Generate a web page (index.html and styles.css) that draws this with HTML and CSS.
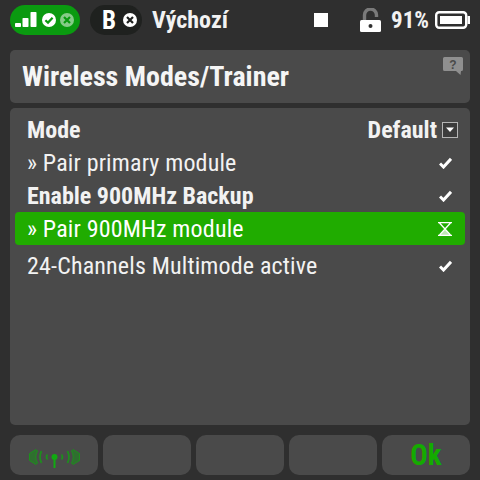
FILE: index.html
```html
<!DOCTYPE html>
<html lang="en">
<head>
<meta charset="utf-8">
<title>Wireless Modes/Trainer</title>
<link rel="stylesheet" href="styles.css">
</head>
<body>
<div class="screen">
  <header class="status">
    <div class="pill pill-green">
      <svg class="bars" width="22" height="16" viewBox="0 0 22 16"><rect x="0" y="11" width="6" height="4" rx="0.800"/><rect x="7.500" y="6" width="6" height="9" rx="0.800"/><rect x="15.500" y="0" width="6" height="15" rx="0.800"/></svg>
      <svg class="dot" width="14" height="14" viewBox="0 0 14 14"><circle cx="7" cy="7" r="7" fill="#fff"/><path d="M3.400 7.200 6 9.600 10.600 4.800" fill="none" stroke="#0a9a10" stroke-width="2.200"/></svg>
      <svg class="dot" width="14" height="14" viewBox="0 0 14 14"><circle cx="7" cy="7" r="7" fill="#86cb88"/><path d="M4 4 10 10M10 4 4 10" fill="none" stroke="#0a9a10" stroke-width="2.200"/></svg>
    </div>
    <div class="pill pill-dark">
      <span class="pill-b">B</span>
      <svg class="dot" width="14" height="14" viewBox="0 0 14 14"><circle cx="7" cy="7" r="7" fill="#fff"/><path d="M4 4 10 10M10 4 4 10" fill="none" stroke="#1f211f" stroke-width="2.200"/></svg>
    </div>
    <span class="profile">Výchozí</span>
    <span class="stop"></span>
    <svg class="lock" width="21" height="24" viewBox="0 0 21 24"><path d="M4.500 12V7a6 6 0 0 1 12 0v2" fill="none" stroke="#7a7a7a" stroke-width="3.400"/><rect x="0" y="12" width="21" height="12" rx="1.500" fill="#fff"/><circle cx="10.500" cy="18" r="2" fill="#2f2f2f"/></svg>
    <span class="pct">91%</span>
    <svg class="batt" width="35" height="18" viewBox="0 0 35 18"><rect x="1.200" y="1.200" width="30" height="15.600" rx="3" fill="none" stroke="#fff" stroke-width="2.400"/><rect x="5" y="5" width="22" height="8" fill="#fff"/><rect x="32.500" y="5" width="2.500" height="8" fill="#fff"/></svg>
  </header>

  <section class="card title-card">
    <h1 class="title">Wireless Modes/Trainer</h1>
    <svg class="help" width="20" height="18" viewBox="0 0 20 18"><path d="M1.500 0H18.500A1.500 1.500 0 0 1 20 1.500V12.500A1.500 1.500 0 0 1 18.500 14H18L17.500 18 13 14H1.500A1.500 1.500 0 0 1 0 12.500V1.500A1.500 1.500 0 0 1 1.500 0Z" fill="#8f8f8f"/><text x="10" y="11.500" class="help-q">?</text></svg>
  </section>

  <main class="card list">
    <div class="row bold">
      <span>Mode</span>
      <span class="default">Default
        <svg class="drop" width="16" height="16" viewBox="0 0 16 16"><rect x="0.500" y="0.500" width="15" height="15" fill="#3c3c3c" stroke="#b5b5b5"/><path d="M4 5.500H12L8 10Z" fill="#fff"/></svg>
      </span>
    </div>
    <div class="row"><span>» Pair primary module</span><svg class="check" width="13" height="12" viewBox="0 0 13 12"><path d="M1 6.500 4.500 10 12 1.800" fill="none" stroke="#fff" stroke-width="3"/></svg></div>
    <div class="row bold"><span>Enable 900MHz Backup</span><svg class="check" width="13" height="12" viewBox="0 0 13 12"><path d="M1 6.500 4.500 10 12 1.800" fill="none" stroke="#fff" stroke-width="3"/></svg></div>
    <div class="row active"><span>» Pair 900MHz module</span>
      <svg class="hour" width="14" height="14" viewBox="0 0 14 14"><path d="M7 7 12 13H2Z" fill="#bfe8b5"/><path d="M0 0.700H14M0 13.300H14M1.500 1 7 7 12.500 13M12.500 1 7 7 1.500 13" fill="none" stroke="#fff" stroke-width="1.300"/></svg>
    </div>
    <div class="row tall"><span>24-Channels Multimode active</span><svg class="check" width="13" height="12" viewBox="0 0 13 12"><path d="M1 6.500 4.500 10 12 1.800" fill="none" stroke="#fff" stroke-width="3"/></svg></div>
  </main>

  <footer class="foot">
    <button class="key">
      <svg width="52" height="26" viewBox="0 0 52 26"><g fill="none" stroke="#1d8f1d"><path d="M8 7.500 1.500 11.500v7L8 22.500 9.500 21Q6 15 9.500 9Z" fill="#2f6f2f"/><path d="M45 7.500 51.500 11.500v7L45 22.500 43.500 21Q47 15 43.500 9Z" fill="#2f6f2f"/><path d="M13.500 9Q10.500 15 13.500 21M39.500 9Q42.500 15 39.500 21" stroke-width="1.700"/><path d="M19.500 12.500Q17.500 15 19.500 17.500M33.500 12.500Q35.500 15 33.500 17.500" stroke-width="1.700"/></g><circle cx="26.500" cy="15" r="3" fill="#11aa11"/><rect x="25.500" y="15" width="2" height="11" fill="#11aa11"/></svg>
    </button>
    <button class="key"></button>
    <button class="key"></button>
    <button class="key"></button>
    <button class="key ok">Ok</button>
  </footer>
</div>
</body>
</html>
```

FILE: styles.css
```css
* { box-sizing: border-box; }
html, body { margin: 0; padding: 0; }
body { background: #2f2f2f; font-family: "Roboto Condensed", "Liberation Sans Narrow", Roboto, sans-serif; color: #fff; }
.screen { width: 480px; height: 480px; display: flex; flex-direction: column; padding: 0 10px 5px; overflow: hidden; }

.status { height: 50px; flex: none; display: flex; align-items: center; padding: 5px 0 15px; }
.pill { height: 30px; border-radius: 15px; display: flex; align-items: center; flex: none; }
.pill-green { width: 70px; background: #0a9a10; padding-left: 5px; }
.bars { fill: #fff; margin-right: 5px; }
.pill-green .dot { margin-right: 4px; }
.pill-dark { width: 52px; margin-left: 10px; background: #1f211f; padding-left: 12px; gap: 7px; }
.pill-b { font-size: 25px; font-weight: 700; }
.profile { margin-left: 10px; font-size: 24px; font-weight: 700; color: #f2f2f2; }
.stop { width: 14px; height: 14px; background: #fff; margin-left: auto; margin-right: 32px; }
.lock { margin-right: 10px; margin-top: -1px; }
.pct { font-size: 23px; font-weight: 700; margin-right: 6px; color: #f2f2f2; }

.card { background: #4a4a4a; border-radius: 5px; }
.title-card { height: 53px; flex: none; display: flex; align-items: center; padding: 0 7px 0 12px; position: relative; }
.title { margin: 0; font-size: 28px; font-weight: 700; color: #f5f5f5; }
.help { position: absolute; right: 7px; top: 7px; }
.help-q { font: 700 12px "Liberation Sans", sans-serif; fill: #4a4a4a; text-anchor: middle; }

.list { margin-top: 5px; height: 317px; flex: none; padding: 5px; }
.row { height: 33px; display: flex; align-items: center; justify-content: space-between; padding: 0 13px 0 12px; font-size: 24px; letter-spacing: 0.16px; color: #f2f2f2; border-radius: 4px; }
.row.bold { font-weight: 700; letter-spacing: 0; }
.default { display: flex; align-items: center; gap: 5px; margin-right: -6px; }
.active { background: #20ac00; color: #fff; }
.tall { height: 42px; }

.foot { margin-top: 10px; height: 40px; flex: none; display: flex; gap: 5px; }
.key { flex: 1; border: 0; padding: 0; background: #4a4a4a; border-radius: 10px; display: flex; align-items: center; justify-content: center; font: inherit; }
.ok { font-size: 29px; font-weight: 700; color: #14ab00; }
```
